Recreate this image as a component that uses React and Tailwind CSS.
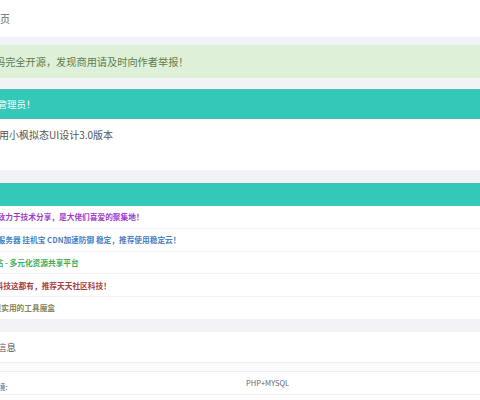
export default function App() {
  const font = { fontFamily: '"Noto Sans CJK SC", "Noto Sans", sans-serif' };
  const rows = [
    { t: "致力于技术分享，是大佬们喜爱的聚集地！", c: "text-[#a23cc6]", ml: "ml-[-2.5px]" },
    { t: "服务器 挂机宝 CDN加速防御 稳定，推荐使用稳定云！", c: "text-[#4a7fc2]", ml: "ml-[-2.5px]" },
    { t: "站 - 多元化资源共享平台", c: "text-[#3eae5c]", ml: "ml-[-4.5px]" },
    { t: "科技这都有，推荐天天社区科技！", c: "text-[#a8403f]", ml: "ml-[-4.5px]" },
    { t: "很实用的工具魔盒", c: "text-[#8a8456]", ml: "ml-[-6.5px]" },
  ];
  return (
    <div
      className="w-[480px] h-[400px] overflow-hidden bg-[#f2f3f7] flex flex-col"
      style={font}
    >
      <div className="h-[37px] bg-white flex items-center shrink-0">
        <span className="ml-[-10px] text-[10px] text-[#666] whitespace-nowrap">首页</span>
      </div>
      <div className="h-[8px] shrink-0" />
      <div className="h-[33px] bg-[#dff0d8] flex items-center shrink-0">
        <span className="ml-[-15.2px] text-[10.2px] text-[#5a7c51] whitespace-nowrap">
          源码完全开源，发现商用请及时向作者举报！
        </span>
      </div>
      <div className="h-[11px] shrink-0" />
      <div className="h-[30px] bg-[#33c8b8] border-y border-[#4cbdb2] flex items-center shrink-0">
        <span className="ml-[-21.5px] text-[9.5px] text-white whitespace-nowrap">您，管理员！</span>
      </div>
      <div className="h-[51px] bg-white pt-[10px] shrink-0">
        <span className="block ml-[-11px] text-[10px] text-[#555] whitespace-nowrap leading-[10px] mt-[1px]">
          使用小枫拟态UI设计3.0版本
        </span>
      </div>
      <div className="h-[13px] shrink-0" />
      <div className="h-[23px] bg-[#33c8b8] border-t border-[#4cbdb2] shrink-0" />
      <div className="flex flex-col bg-white shrink-0">
        {rows.map((r, i) => (
          <div
            key={i}
            className="h-[22.8px] border-b border-[#f0f1f4] flex items-center"
          >
            <span className={`${r.ml} text-[7.7px] font-bold whitespace-nowrap ${r.c}`}>
              {r.t}
            </span>
          </div>
        ))}
      </div>
      <div className="h-[12px] shrink-0" />
      <div className="h-[31px] bg-white flex items-center border-b border-[#eeeff3] shrink-0">
        <span className="ml-[-3px] text-[9.5px] text-[#555] whitespace-nowrap">信息</span>
      </div>
      <div className="h-[9px] bg-[#fafbfc] border-b border-[#eeeff3] shrink-0" />
      <div className="h-[23px] bg-white flex items-center border-b border-[#eeeff3] shrink-0">
        <div className="w-[246px] shrink-0">
          <span className="ml-[-2px] text-[7.5px] text-[#666] whitespace-nowrap">境:</span>
        </div>
        <span className="text-[7.5px] text-[#666] whitespace-nowrap">PHP+MYSQL</span>
      </div>
      <div className="flex-1 bg-white" />
    </div>
  );
}
